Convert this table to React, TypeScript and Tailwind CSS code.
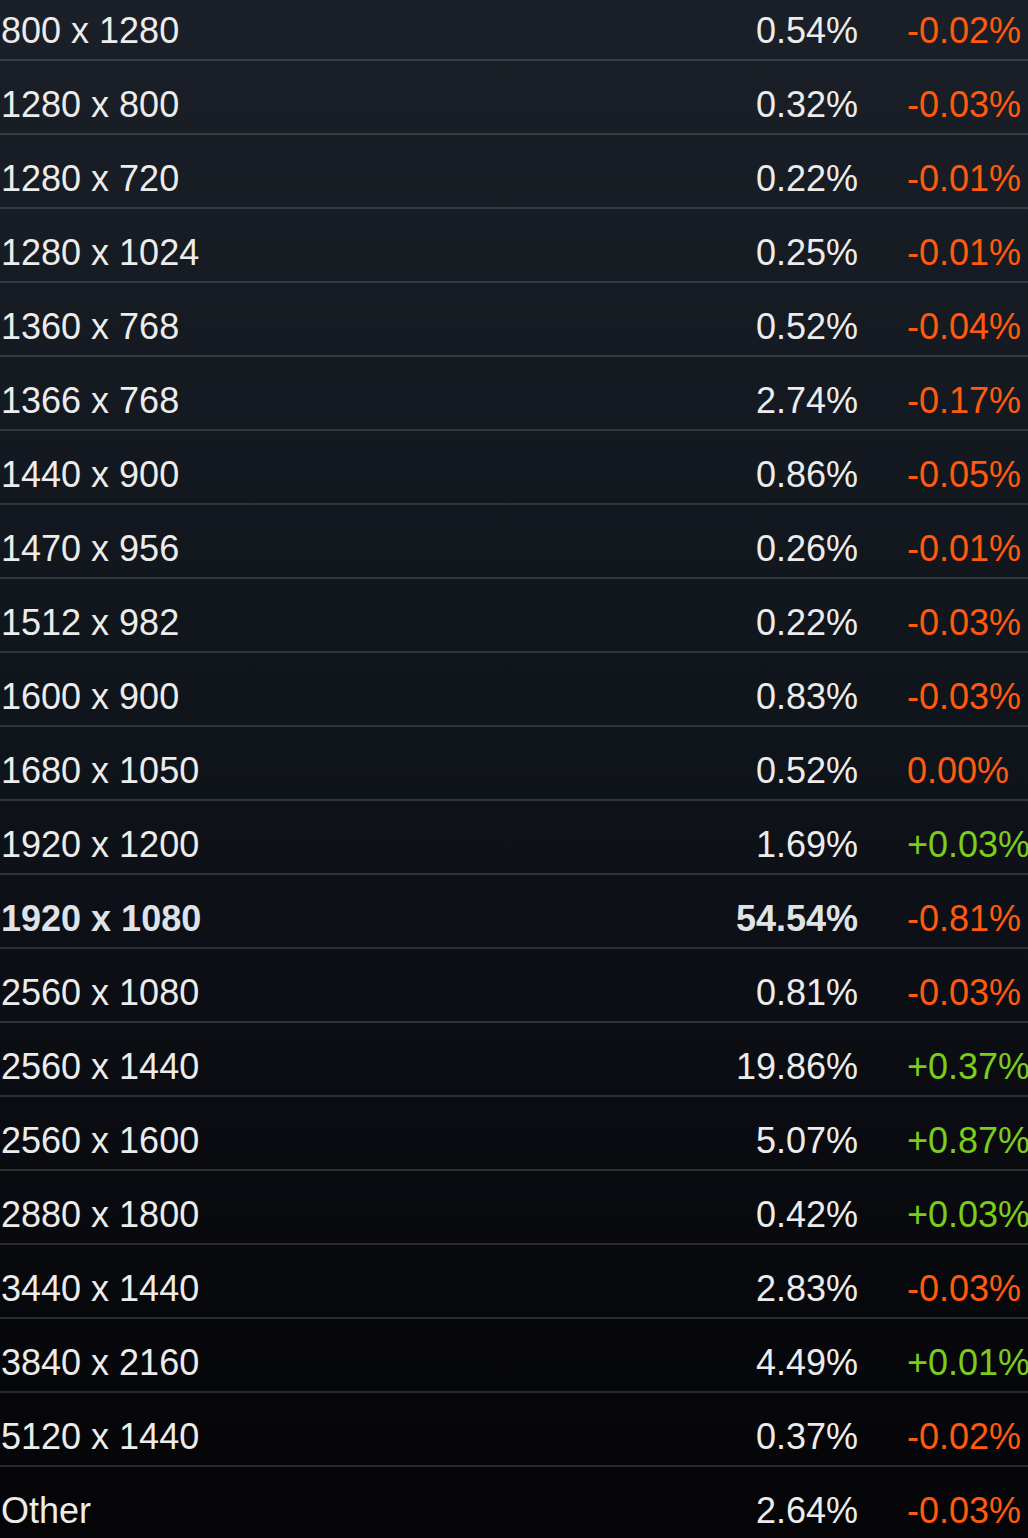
import React from 'react';

interface Row {
  res: string;
  share: string;
  change: string;
  bold?: boolean;
}

const rows: Row[] = [
  { res: '800 x 1280', share: '0.54%', change: '-0.02%' },
  { res: '1280 x 800', share: '0.32%', change: '-0.03%' },
  { res: '1280 x 720', share: '0.22%', change: '-0.01%' },
  { res: '1280 x 1024', share: '0.25%', change: '-0.01%' },
  { res: '1360 x 768', share: '0.52%', change: '-0.04%' },
  { res: '1366 x 768', share: '2.74%', change: '-0.17%' },
  { res: '1440 x 900', share: '0.86%', change: '-0.05%' },
  { res: '1470 x 956', share: '0.26%', change: '-0.01%' },
  { res: '1512 x 982', share: '0.22%', change: '-0.03%' },
  { res: '1600 x 900', share: '0.83%', change: '-0.03%' },
  { res: '1680 x 1050', share: '0.52%', change: '0.00%' },
  { res: '1920 x 1200', share: '1.69%', change: '+0.03%' },
  { res: '1920 x 1080', share: '54.54%', change: '-0.81%', bold: true },
  { res: '2560 x 1080', share: '0.81%', change: '-0.03%' },
  { res: '2560 x 1440', share: '19.86%', change: '+0.37%' },
  { res: '2560 x 1600', share: '5.07%', change: '+0.87%' },
  { res: '2880 x 1800', share: '0.42%', change: '+0.03%' },
  { res: '3440 x 1440', share: '2.83%', change: '-0.03%' },
  { res: '3840 x 2160', share: '4.49%', change: '+0.01%' },
  { res: '5120 x 1440', share: '0.37%', change: '-0.02%' },
  { res: 'Other', share: '2.64%', change: '-0.03%' },
];

const StatRow: React.FC<{ row: Row }> = ({ row }) => {
  const up = row.change.startsWith('+');
  const text = row.bold ? 'font-bold text-[#dfe3e8]' : 'text-[#ececec]';
  return (
    <div className="grid h-[74px] grid-cols-[858px_1fr] border-b-2 border-white/[0.14] pt-[15px] leading-[57px]">
      <div className="flex justify-between whitespace-nowrap pl-[1px]">
        <span className={text}>{row.res}</span>
        <span className={text}>{row.share}</span>
      </div>
      <div className={`whitespace-nowrap pl-[49px] ${up ? 'text-[#7ccc1c]' : 'text-[#ff5a0e]'}`}>
        {row.change}
      </div>
    </div>
  );
};

export default function App() {
  return (
    <div className="h-[1538px] w-[1028px] overflow-hidden bg-linear-to-b from-[#1b1f27] via-[#0f131a] to-[#050507] font-['Liberation_Sans',Arial,sans-serif] text-[36px]">
      <div className="-mt-[13px]">
        {rows.map((r) => (
          <StatRow key={r.res} row={r} />
        ))}
      </div>
    </div>
  );
}
